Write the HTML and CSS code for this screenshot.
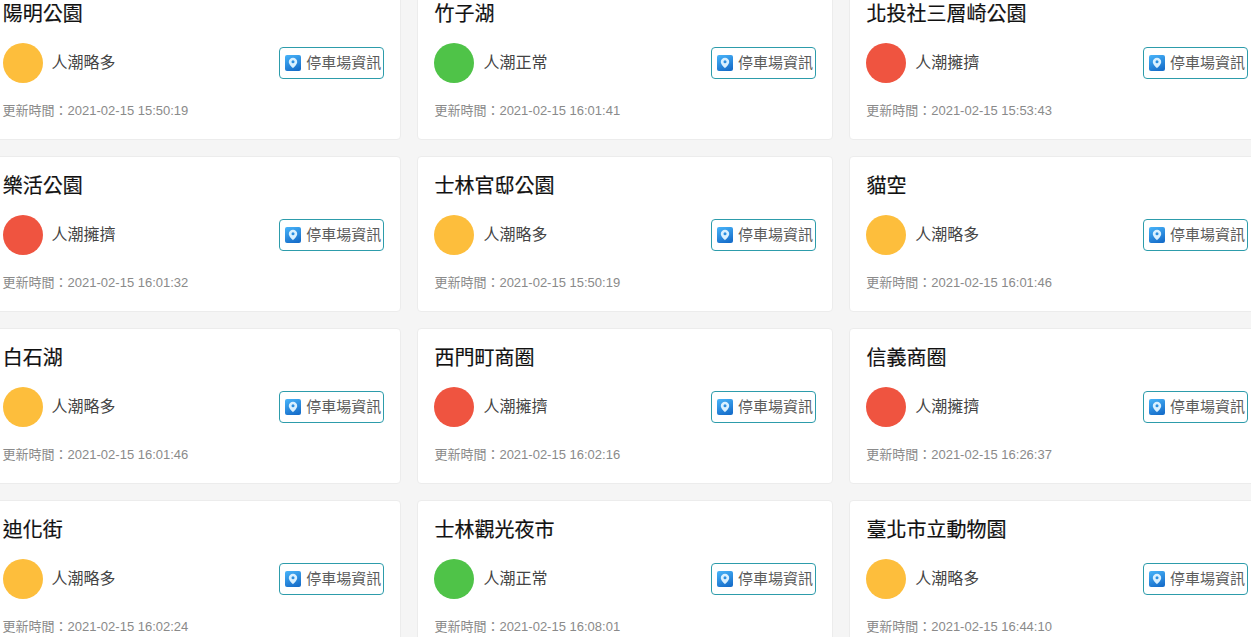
FILE: index.html
```html
<!DOCTYPE html>
<html lang="zh-Hant">
<head>
<meta charset="utf-8">
<title>人潮資訊</title>
<link rel="stylesheet" href="styles.css">
</head>
<body>
<svg class="defs" width="0" height="0" aria-hidden="true"><defs>
<linearGradient id="pin-bg" x1="0.2" y1="0" x2="0.6" y2="1"><stop offset="0" stop-color="#45b0f7"/><stop offset="1" stop-color="#176fcb"/></linearGradient>
<symbol id="pin" viewBox="0 0 16 16"><rect width="16" height="16" rx="2" fill="url(#pin-bg)"/><path d="M8 2.800a4.200 4.200 0 0 0-4.200 4.200C3.800 9.700 8 13.200 8 13.200s4.200-3.500 4.200-6.200A4.200 4.200 0 0 0 8 2.800z" fill="#d9f0ff"/><circle cx="8" cy="6.800" r="1.500" fill="#2a8ee0"/></symbol>
</defs></svg>
<main class="grid">
<article class="card"><h2 class="name">陽明公園</h2><div class="row"><span class="dot busy"></span><span class="status">人潮略多</span><a class="park"><svg class="pin"><use href="#pin"/></svg>停車場資訊</a></div><p class="time">更新時間：2021-02-15 15:50:19</p></article>
<article class="card"><h2 class="name">竹子湖</h2><div class="row"><span class="dot ok"></span><span class="status">人潮正常</span><a class="park"><svg class="pin"><use href="#pin"/></svg>停車場資訊</a></div><p class="time">更新時間：2021-02-15 16:01:41</p></article>
<article class="card"><h2 class="name">北投社三層崎公園</h2><div class="row"><span class="dot full"></span><span class="status">人潮擁擠</span><a class="park"><svg class="pin"><use href="#pin"/></svg>停車場資訊</a></div><p class="time">更新時間：2021-02-15 15:53:43</p></article>
<article class="card"><h2 class="name">樂活公園</h2><div class="row"><span class="dot full"></span><span class="status">人潮擁擠</span><a class="park"><svg class="pin"><use href="#pin"/></svg>停車場資訊</a></div><p class="time">更新時間：2021-02-15 16:01:32</p></article>
<article class="card"><h2 class="name">士林官邸公園</h2><div class="row"><span class="dot busy"></span><span class="status">人潮略多</span><a class="park"><svg class="pin"><use href="#pin"/></svg>停車場資訊</a></div><p class="time">更新時間：2021-02-15 15:50:19</p></article>
<article class="card"><h2 class="name">貓空</h2><div class="row"><span class="dot busy"></span><span class="status">人潮略多</span><a class="park"><svg class="pin"><use href="#pin"/></svg>停車場資訊</a></div><p class="time">更新時間：2021-02-15 16:01:46</p></article>
<article class="card"><h2 class="name">白石湖</h2><div class="row"><span class="dot busy"></span><span class="status">人潮略多</span><a class="park"><svg class="pin"><use href="#pin"/></svg>停車場資訊</a></div><p class="time">更新時間：2021-02-15 16:01:46</p></article>
<article class="card"><h2 class="name">西門町商圈</h2><div class="row"><span class="dot full"></span><span class="status">人潮擁擠</span><a class="park"><svg class="pin"><use href="#pin"/></svg>停車場資訊</a></div><p class="time">更新時間：2021-02-15 16:02:16</p></article>
<article class="card"><h2 class="name">信義商圈</h2><div class="row"><span class="dot full"></span><span class="status">人潮擁擠</span><a class="park"><svg class="pin"><use href="#pin"/></svg>停車場資訊</a></div><p class="time">更新時間：2021-02-15 16:26:37</p></article>
<article class="card"><h2 class="name">迪化街</h2><div class="row"><span class="dot busy"></span><span class="status">人潮略多</span><a class="park"><svg class="pin"><use href="#pin"/></svg>停車場資訊</a></div><p class="time">更新時間：2021-02-15 16:02:24</p></article>
<article class="card"><h2 class="name">士林觀光夜市</h2><div class="row"><span class="dot ok"></span><span class="status">人潮正常</span><a class="park"><svg class="pin"><use href="#pin"/></svg>停車場資訊</a></div><p class="time">更新時間：2021-02-15 16:08:01</p></article>
<article class="card"><h2 class="name">臺北市立動物園</h2><div class="row"><span class="dot busy"></span><span class="status">人潮略多</span><a class="park"><svg class="pin"><use href="#pin"/></svg>停車場資訊</a></div><p class="time">更新時間：2021-02-15 16:44:10</p></article>
</main>
</body>
</html>
```
FILE: styles.css
```css
html, body {
  margin: 0;
  height: 100%;
  overflow: hidden;
  background: #f5f5f5;
  font-family: "Liberation Sans", "Noto Sans CJK TC", sans-serif;
}
.defs { display: block; height: 0; }
.grid {
  display: grid;
  grid-template-columns: repeat(3, 415.8px);
  grid-auto-rows: 156px;
  gap: 16px;
  margin: -16px 0 0 -14.9px;
}
.card {
  box-sizing: border-box;
  background: #fff;
  border: 1px solid #ececec;
  border-radius: 4px;
  padding: 17px 15.6px 0 16.5px;
}
.name {
  margin: 0 0 0 0.2px;
  font-size: 20px;
  font-weight: 400;
  line-height: 24px;
  color: #111;
  -webkit-text-stroke: 0.2px #111;
}
.row {
  display: flex;
  align-items: center;
  height: 40px;
  margin-top: 17px;
}
.dot {
  width: 40px;
  height: 40px;
  border-radius: 50%;
  flex: none;
}
.dot.busy { background: #fdbe3c; }
.dot.ok { background: #4fc348; }
.dot.full { background: #ef5440; }
.status {
  margin-left: 9px;
  margin-top: -5px;
  font-size: 16px;
  color: #444;
}
.park {
  margin-left: auto;
  box-sizing: border-box;
  display: flex;
  align-items: center;
  width: 105px;
  height: 32px;
  padding: 0 0 4px 5px;
  border: 1px solid #2d9cab;
  border-radius: 4px;
  font-size: 15px;
  color: #5c5c5c;
  white-space: nowrap;
}
.pin {
  width: 16px;
  height: 16px;
  margin: 4px 5px 0 0;
  flex: none;
}
.time {
  margin: 19px 0 0;
  font-size: 13px;
  line-height: 18px;
  color: #8a8a8a;
}
```
